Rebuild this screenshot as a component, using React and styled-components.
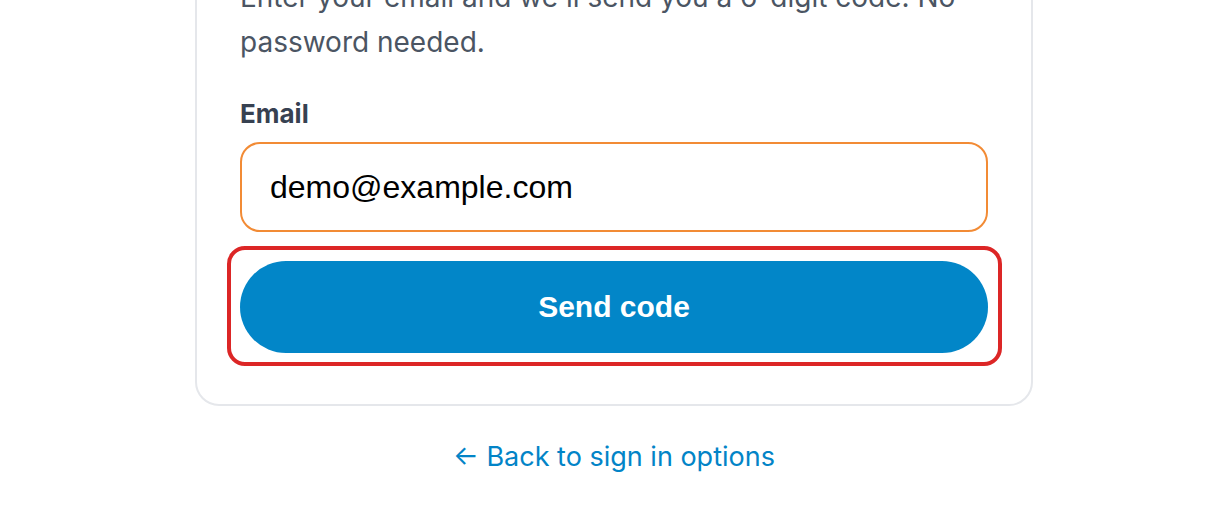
import styled, { createGlobalStyle } from "styled-components";

const GlobalStyle = createGlobalStyle`
  * {
    box-sizing: border-box;
  }
  body {
    margin: 0;
    background: #fff;
    font-family: Inter, "Noto Sans", sans-serif;
  }
`;

export default function App() {
  return (
    <>
      <GlobalStyle />
      <Page>
        <Card>
          <Intro>
            Enter your email and we'll send you a 6-digit code. No password
            needed.
          </Intro>
          <Label htmlFor="email">Email</Label>
          <Input id="email" type="email" defaultValue="demo@example.com" />
          <ButtonWrap>
            <SendButton type="button">Send code</SendButton>
            <Highlight />
          </ButtonWrap>
        </Card>
        <BackLink href="#">← Back to sign in options</BackLink>
      </Page>
    </>
  );
}

const Page = styled.div`
  display: flex;
  flex-direction: column;
  align-items: center;
  width: 100%;
  min-height: 532px;
  overflow: hidden;
`;

const Card = styled.div`
  width: 838px;
  margin-top: -70px;
  padding: 43px 43px 51px;
  border: 2px solid #e5e7eb;
  border-radius: 24px;
  background: #fff;
  display: flex;
  flex-direction: column;
`;

const Intro = styled.p`
  margin: 0;
  font-size: 28px;
  line-height: 45px;
  color: #4b5563;
`;

const Label = styled.label`
  margin-top: 31px;
  font-size: 26px;
  line-height: 36px;
  font-weight: 700;
  color: #374151;
`;

const Input = styled.input`
  margin-top: 10px;
  height: 90px;
  width: 100%;
  padding: 0 28px;
  border: 2px solid #f28b35;
  border-radius: 20px;
  font-family: "Liberation Sans", Arial, sans-serif;
  font-size: 32px;
  color: #000;
  background: #fff;
  outline: none;
`;

const ButtonWrap = styled.div`
  position: relative;
  margin-top: 29px;
`;

const SendButton = styled.button`
  display: block;
  width: 100%;
  height: 92px;
  border: none;
  border-radius: 46px;
  background: #0286c8;
  color: #fff;
  font-family: "Liberation Sans", Arial, sans-serif;
  font-size: 30px;
  font-weight: 700;
  cursor: pointer;
`;

// red focus ring drawn on top of the button
const Highlight = styled.span`
  position: absolute;
  top: -15px;
  left: -13px;
  right: -14px;
  bottom: -13px;
  border: 4px solid #dc2626;
  border-radius: 18px;
  pointer-events: none;
`;

const BackLink = styled.a`
  margin-top: 34px;
  font-size: 27px;
  color: #0284c7;
  text-decoration: none;
`;
